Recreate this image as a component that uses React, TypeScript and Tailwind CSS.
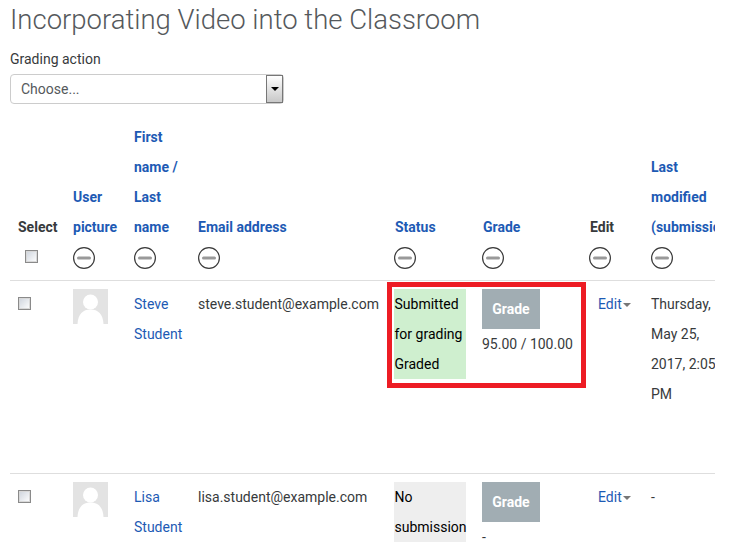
const linkClass = "text-[#1d5ab4]";

function MinusCircle() {
	return (
		<div className="h-[30px] pt-[5px]">
			<svg width="22" height="22" viewBox="0 0 22 22" className="block">
				<circle cx="11" cy="11" r="10.4" fill="#fff" stroke="#3a3a3a" strokeWidth="1.2" />
				<line x1="5.5" y1="11" x2="16.5" y2="11" stroke="#999" strokeWidth="3" strokeLinecap="round" />
			</svg>
		</div>
	);
}

function Checkbox({ className }: { className: string }) {
	return (
		<span className={`block w-[13px] h-[13px] border border-[#8a8a8a] bg-gradient-to-br from-[#cdd3dc] to-white shadow-[inset_0_0_0_1px_#d8d8d8] ${className}`} />
	);
}

function Avatar() {
	return (
		<svg width="35" height="35" viewBox="0 0 35 35" className="block bg-[#e3e3e3]">
			<circle cx="17.5" cy="13" r="7.5" fill="#fff" />
			<path d="M4.5 35 C5 25 10 20.5 17.5 20.5 C25 20.5 30 25 30.5 35 Z" fill="#fff" />
		</svg>
	);
}

function GradeButton() {
	return (
		<div className="w-[58px] h-10 bg-[#a1adb3] text-white font-bold flex items-center justify-center">
			Grade
		</div>
	);
}

function EditMenu() {
	return (
		<div className="flex items-center pl-[9px]">
			<span className={linkClass}>Edit</span>
			<span className="ml-px mt-px w-0 h-0 border-x-[4px] border-x-transparent border-t-[4px] border-t-[#777]" />
		</div>
	);
}

function Th({ children, link }: { children?: React.ReactNode; link?: boolean }) {
	return (
		<th className={`px-2 pt-2 pb-2 align-bottom text-left font-bold ${link ? linkClass : ""}`}>
			{children}
			<MinusCircle />
		</th>
	);
}

function Row({
	first,
	email,
	status,
	statusClass,
	grade,
	modified,
}: {
	first: string;
	email: string;
	status: React.ReactNode;
	statusClass: string;
	grade: string;
	modified: React.ReactNode;
}) {
	return (
		<tr className="h-[193px] border-b border-[#dedede] align-top">
			<td className="px-2 pt-2">
				<Checkbox className="mt-2" />
			</td>
			<td className="px-2 pt-2">
				<Avatar />
			</td>
			<td className={`px-2 pt-2 ${linkClass}`}>
				{first}
				<br />
				Student
			</td>
			<td className="px-2 pt-2">{email}</td>
			<td className="px-2 pt-2">
				<div className={`text-black w-[72px] pl-[0.5px] ${statusClass}`}>{status}</div>
			</td>
			<td className="px-2 pt-2">
				<GradeButton />
				<div className="whitespace-nowrap">{grade}</div>
			</td>
			<td className="px-2 pt-2">
				<EditMenu />
			</td>
			<td className="px-2 pt-2">{modified}</td>
		</tr>
	);
}

export default function App() {
	return (
		<div className="relative h-[550px] w-[730px] overflow-hidden bg-white pl-2.5 font-['Roboto',sans-serif] text-[14px] leading-[30px] text-[#373a3c]">
			<h1 className="h-10 text-[27.5px] leading-10 font-light text-[#55595c]">
				Incorporating Video into the Classroom
			</h1>
			<div className="mt-[4px] h-[30px] leading-[30px]">Grading action</div>
			<div className="flex h-[30px] w-[274px] items-center justify-between rounded border border-[#ccc] pl-2.5 text-[#55595c]">
				Choose...
				<div className="flex h-[28px] w-[17px] items-center justify-center border border-[#777] bg-gradient-to-b from-white to-[#c8c8c8]">
					<span className="h-0 w-0 border-x-[4px] border-x-transparent border-t-[4px] border-t-black" />
				</div>
			</div>
			<div className="mt-[10px] w-[705px] overflow-hidden">
				<table className="w-[729px] table-fixed border-collapse">
					<colgroup>
						<col className="w-[55px]" />
						<col className="w-[61px]" />
						<col className="w-[64px]" />
						<col className="w-[196px]" />
						<col className="w-[88px]" />
						<col className="w-[107px]" />
						<col className="w-[62px]" />
						<col className="w-[96px]" />
					</colgroup>
					<thead>
						<tr className="border-b border-[#dedede]">
							<th className="px-2 pt-2 pb-2 align-bottom text-left font-bold">
								Select
								<div className="h-[30px] pt-2">
									<Checkbox className="ml-[7px]" />
								</div>
							</th>
							<Th link>User picture</Th>
							<Th link>First name / Last name</Th>
							<Th link>Email address</Th>
							<Th link><span className="pl-px">Status</span></Th>
							<Th link><span className="pl-px">Grade</span></Th>
							<Th><span className="pl-px">Edit</span></Th>
							<Th link>Last modified (submission)</Th>
						</tr>
					</thead>
					<tbody>
						<Row
							first="Steve"
							email="steve.student@example.com"
							status="Submitted for grading Graded"
							statusClass="bg-[#cfefcf]"
							grade="95.00 / 100.00"
							modified="Thursday, May 25, 2017, 2:05 PM"
						/>
						<Row
							first="Lisa"
							email="lisa.student@example.com"
							status="No submission"
							statusClass="bg-[#eee]"
							grade="-"
							modified="-"
						/>
					</tbody>
				</table>
			</div>
			{/* annotation drawn over the screenshot */}
			<div className="absolute left-[387px] top-[282px] h-[106px] w-[199px] border-[5px] border-[#ed1c24]" />
		</div>
	);
}
